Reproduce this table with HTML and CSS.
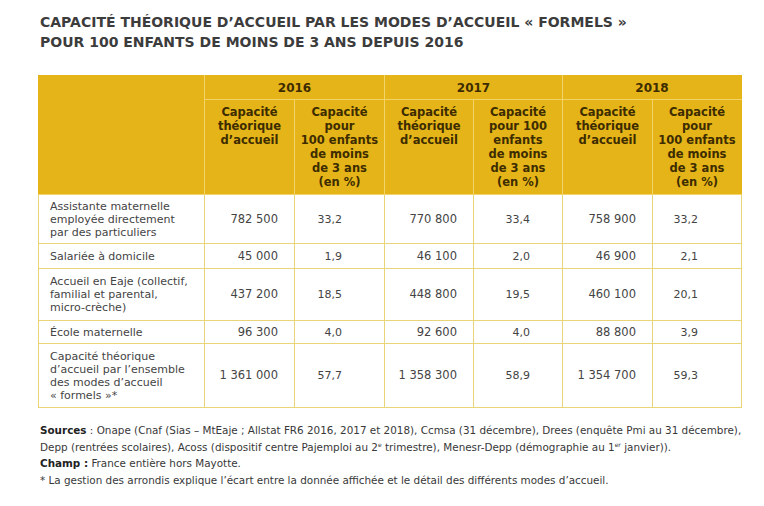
FILE: index.html
```html
<!DOCTYPE html>
<html lang="fr">
<head>
<meta charset="utf-8">
<title>Capacité théorique d'accueil</title>
<link rel="stylesheet" href="styles.css">
</head>
<body>
<div class="page">
  <h1 class="title">CAPACITÉ THÉORIQUE D’ACCUEIL PAR LES MODES D’ACCUEIL « FORMELS »<br>POUR 100 ENFANTS DE MOINS DE 3 ANS DEPUIS 2016</h1>
  <table class="data">
    <colgroup>
      <col class="c-label"><col class="c-a"><col class="c-b"><col class="c-a2"><col class="c-b2"><col class="c-a"><col class="c-b2">
    </colgroup>
    <thead>
      <tr class="r-year">
        <th rowspan="2" class="h-empty"></th>
        <th colspan="2">2016</th>
        <th colspan="2">2017</th>
        <th colspan="2">2018</th>
      </tr>
      <tr class="r-sub">
        <th>Capacité<br>théorique<br>d’accueil</th>
        <th>Capacité<br>pour<br>100 enfants<br>de moins<br>de 3 ans<br>(en %)</th>
        <th>Capacité<br>théorique<br>d’accueil</th>
        <th>Capacité<br>pour 100<br>enfants<br>de moins<br>de 3 ans<br>(en %)</th>
        <th>Capacité<br>théorique<br>d’accueil</th>
        <th>Capacité<br>pour<br>100 enfants<br>de moins<br>de 3 ans<br>(en %)</th>
      </tr>
    </thead>
    <tbody>
      <tr class="r1">
        <td class="lab">Assistante maternelle<br>employée directement<br>par des particuliers</td>
        <td class="num">782 500</td><td class="pct p16">33,2</td>
        <td class="num">770 800</td><td class="pct p17">33,4</td>
        <td class="num">758 900</td><td class="pct p18">33,2</td>
      </tr>
      <tr class="r2">
        <td class="lab">Salariée à domicile</td>
        <td class="num">45 000</td><td class="pct p16">1,9</td>
        <td class="num">46 100</td><td class="pct p17">2,0</td>
        <td class="num">46 900</td><td class="pct p18">2,1</td>
      </tr>
      <tr class="r3">
        <td class="lab">Accueil en Eaje (collectif,<br>familial et parental,<br>micro-crèche)</td>
        <td class="num">437 200</td><td class="pct p16">18,5</td>
        <td class="num">448 800</td><td class="pct p17">19,5</td>
        <td class="num">460 100</td><td class="pct p18">20,1</td>
      </tr>
      <tr class="r4">
        <td class="lab">École maternelle</td>
        <td class="num">96 300</td><td class="pct p16">4,0</td>
        <td class="num">92 600</td><td class="pct p17">4,0</td>
        <td class="num">88 800</td><td class="pct p18">3,9</td>
      </tr>
      <tr class="r5">
        <td class="lab">Capacité théorique<br>d’accueil par l’ensemble<br>des modes d’accueil<br>« formels »*</td>
        <td class="num">1 361 000</td><td class="pct p16">57,7</td>
        <td class="num">1 358 300</td><td class="pct p17">58,9</td>
        <td class="num">1 354 700</td><td class="pct p18">59,3</td>
      </tr>
    </tbody>
  </table>
  <div class="notes">
    <p><b>Sources</b> : Onape (Cnaf (Sias – MtEaje ; Allstat FR6 2016, 2017 et 2018), Ccmsa (31 décembre), Drees (enquête Pmi au 31 décembre),<br>Depp (rentrées scolaires), Acoss (dispositif centre Pajemploi au 2<sup>e</sup> trimestre), Menesr-Depp (démographie au 1<sup>er</sup> janvier)).</p>
    <p><b>Champ :</b> France entière hors Mayotte.</p>
    <p>* La gestion des arrondis explique l’écart entre la donnée affichée et le détail des différents modes d’accueil.</p>
  </div>
</div>
</body>
</html>
```
FILE: styles.css
```css
html, body {
  margin: 0;
  padding: 0;
  background: #ffffff;
}

.page {
  padding: 12px 0 0 38px;
  font-family: "DejaVu Sans", "Liberation Sans", sans-serif;
  color: #3a3a3a;
}

.title {
  margin: 0 0 23px 2px;
  font-size: 14px;
  line-height: 20px;
  font-weight: 700;
  color: #3c3c3c;
}

.data {
  border-collapse: collapse;
  table-layout: fixed;
  width: 703px;
}

.c-label { width: 166px; }
.c-a { width: 90px; }
.c-b { width: 90px; }
.c-a2 { width: 89px; }
.c-b2 { width: 89px; }

.data th {
  background: #e4b418;
  color: #3d2c00;
  font-size: 11.5px;
  line-height: 14px;
  font-weight: 700;
  text-align: center;
  vertical-align: top;
  padding: 0;
  border: 1px solid #f2d46a;
  border-top-color: #e4b418;
}

.data th.h-empty {
  border-left-color: #e4b418;
}

.data thead tr th:last-child {
  border-right-color: #e4b418;
}

.r-year th {
  height: 23px;
  vertical-align: middle;
  font-size: 12px;
}

.r-sub th {
  height: 83px;
  padding: 5px 0 5px;
}

.data td {
  font-size: 11px;
  line-height: 13px;
  color: #444444;
  border: 1px solid #e8d479;
  padding: 0;
  vertical-align: middle;
}

.data td.lab {
  padding-left: 11px;
  text-align: left;
}

.data td.num {
  text-align: right;
  padding-right: 16px;
  font-size: 11.5px;
}

.data td.pct { text-align: right; }
.data td.p16 { padding-right: 42px; }
.data td.p17 { padding-right: 32px; }
.data td.p18 { padding-right: 43px; }

.r1 td { height: 48px; }
.r2 td { height: 24px; }
.r3 td { height: 51px; }
.r4 td { height: 22px; }
.r5 td { height: 63px; }

.notes {
  margin: 14px 0 0 2px;
  font-size: 10.4px;
  line-height: 16.5px;
  color: #383838;
}

.notes p {
  margin: 0;
  white-space: nowrap;
}

.notes b {
  font-weight: 700;
  color: #222222;
}

.notes sup {
  font-size: 6px;
  line-height: 0;
  vertical-align: 4px;
}
```
